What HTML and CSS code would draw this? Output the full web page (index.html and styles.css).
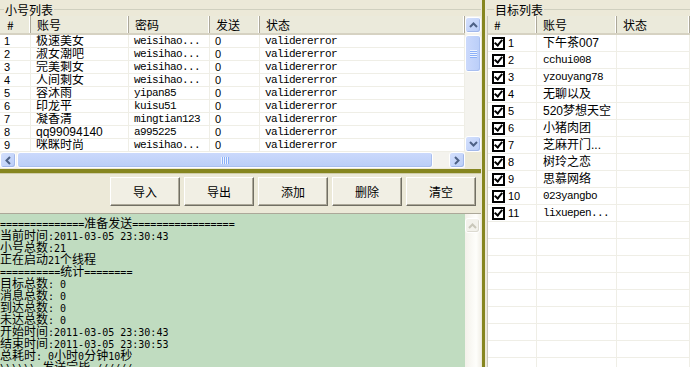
FILE: index.html
```html
<!DOCTYPE html>
<html lang="zh-CN">
<head>
    <meta charset="UTF-8">
    <title>群发</title>
    <link rel="stylesheet" href="styles.css">
</head>
<body>
<div class="app">
    <div class="left">
        <div class="group-title"><span>小号列表</span></div>
        <div class="listview accounts">
            <div class="lv-main">
                <div class="lv-head cols-a">
                    <div class="c-first">#</div><div>账号</div><div>密码</div><div>发送</div><div>状态</div>
                </div>
                <div class="lv-row cols-a"><div class="c-first num">1</div><div>极速美女</div><div class="mono">weisihao...</div><div class="num">0</div><div class="mono">validererror</div></div>
                <div class="lv-row cols-a"><div class="c-first num">2</div><div>淑女潮吧</div><div class="mono">weisihao...</div><div class="num">0</div><div class="mono">validererror</div></div>
                <div class="lv-row cols-a"><div class="c-first num">3</div><div>完美剩女</div><div class="mono">weisihao...</div><div class="num">0</div><div class="mono">validererror</div></div>
                <div class="lv-row cols-a"><div class="c-first num">4</div><div>人间剩女</div><div class="mono">weisihao...</div><div class="num">0</div><div class="mono">validererror</div></div>
                <div class="lv-row cols-a"><div class="c-first num">5</div><div>容沐雨</div><div class="mono">yipan85</div><div class="num">0</div><div class="mono">validererror</div></div>
                <div class="lv-row cols-a"><div class="c-first num">6</div><div>印龙平</div><div class="mono">kuisu51</div><div class="num">0</div><div class="mono">validererror</div></div>
                <div class="lv-row cols-a"><div class="c-first num">7</div><div>凝香清</div><div class="mono">mingtian123</div><div class="num">0</div><div class="mono">validererror</div></div>
                <div class="lv-row cols-a"><div class="c-first num">8</div><div>qq99094140</div><div class="mono">a995225</div><div class="num">0</div><div class="mono">validererror</div></div>
                <div class="lv-row cols-a"><div class="c-first num">9</div><div>咪眯时尚</div><div class="mono">weisihao...</div><div class="num">0</div><div class="mono">validererror</div></div>
            </div>
            <div class="vscroll">
                <div class="sb-btn"><svg width="9" height="6" viewBox="0 0 9 6"><polyline points="1,5 4.5,1.5 8,5" fill="none" stroke="#4d6185" stroke-width="2"/></svg></div>
                <div class="sb-thumb v"><span class="grip"></span></div>
                <div class="sb-track"></div>
                <div class="sb-btn"><svg width="9" height="6" viewBox="0 0 9 6"><polyline points="1,1 4.5,4.5 8,1" fill="none" stroke="#4d6185" stroke-width="2"/></svg></div>
            </div>
            <div class="hscroll">
                <div class="sb-btn"><svg width="6" height="9" viewBox="0 0 6 9"><polyline points="5,1 1.5,4.5 5,8" fill="none" stroke="#4d6185" stroke-width="2"/></svg></div>
                <div class="sb-thumb h"><span class="grip"></span></div>
                <div class="sb-track"></div>
                <div class="sb-btn"><svg width="6" height="9" viewBox="0 0 6 9"><polyline points="1,1 4.5,4.5 1,8" fill="none" stroke="#4d6185" stroke-width="2"/></svg></div>
            </div>
            <div class="corner"></div>
        </div>

        <div class="hsplit"></div>

        <div class="toolbar">
            <button class="btn">导入</button>
            <button class="btn">导出</button>
            <button class="btn">添加</button>
            <button class="btn">删除</button>
            <button class="btn">清空</button>
        </div>

        <div class="log">
            <div class="log-text">
                <div class="line"><span class="en">==============</span>准备发送<span class="en">=================</span></div>
                <div class="line">当前时间<span class="en">:2011-03-05 23:30:43</span></div>
                <div class="line">小号总数<span class="en">:21</span></div>
                <div class="line">正在启动<span class="en">21</span>个线程</div>
                <div class="line"><span class="en">==========</span>统计<span class="en">========</span></div>
                <div class="line">目标总数<span class="en">: 0</span></div>
                <div class="line">消息总数<span class="en">: 0</span></div>
                <div class="line">到达总数<span class="en">: 0</span></div>
                <div class="line">未达总数<span class="en">: 0</span></div>
                <div class="line">开始时间<span class="en">:2011-03-05 23:30:43</span></div>
                <div class="line">结束时间<span class="en">:2011-03-05 23:30:53</span></div>
                <div class="line">总耗时<span class="en">: 0</span>小时<span class="en">0</span>分钟<span class="en">10</span>秒</div>
                <div class="line"><span class="en">\\\\\\ </span>发送完毕<span class="en"> //////</span></div>
            </div>
            <div class="vscroll disabled">
                <div class="sb-btn"><svg width="9" height="6" viewBox="0 0 9 6"><polyline points="1,5 4.5,1.5 8,5" fill="none" stroke="#c9c7ba" stroke-width="2"/></svg></div>
            </div>
        </div>
    </div>

    <div class="vsplit"></div>

    <div class="right">
        <div class="group-title"><span>目标列表</span></div>
        <div class="listview targets">
            <div class="lv-head cols-b">
                <div>#</div><div>账号</div><div>状态</div>
            </div>
            <div class="lv-row cols-b"><div class="chk"><span class="cb"></span>1</div><div>下午茶007</div><div></div></div>
            <div class="lv-row cols-b"><div class="chk"><span class="cb"></span>2</div><div class="mono">cchui008</div><div></div></div>
            <div class="lv-row cols-b"><div class="chk"><span class="cb"></span>3</div><div class="mono">yzouyang78</div><div></div></div>
            <div class="lv-row cols-b"><div class="chk"><span class="cb"></span>4</div><div>无聊以及</div><div></div></div>
            <div class="lv-row cols-b"><div class="chk"><span class="cb"></span>5</div><div>520梦想天空</div><div></div></div>
            <div class="lv-row cols-b"><div class="chk"><span class="cb"></span>6</div><div>小猪肉团</div><div></div></div>
            <div class="lv-row cols-b"><div class="chk"><span class="cb"></span>7</div><div>芝麻开门...</div><div></div></div>
            <div class="lv-row cols-b"><div class="chk"><span class="cb"></span>8</div><div>树玲之恋</div><div></div></div>
            <div class="lv-row cols-b"><div class="chk"><span class="cb"></span>9</div><div>思慕网络</div><div></div></div>
            <div class="lv-row cols-b"><div class="chk"><span class="cb"></span>10</div><div class="mono">023yangbo</div><div></div></div>
            <div class="lv-row cols-b"><div class="chk"><span class="cb"></span>11</div><div class="mono">lixuepen...</div><div></div></div>
            <div class="lv-row cols-b"><div></div><div></div><div></div></div>
            <div class="lv-row cols-b"><div></div><div></div><div></div></div>
            <div class="lv-row cols-b"><div></div><div></div><div></div></div>
            <div class="lv-row cols-b"><div></div><div></div><div></div></div>
            <div class="lv-row cols-b"><div></div><div></div><div></div></div>
            <div class="lv-row cols-b"><div></div><div></div><div></div></div>
            <div class="lv-row cols-b"><div></div><div></div><div></div></div>
            <div class="lv-row cols-b"><div></div><div></div><div></div></div>
            <div class="lv-row cols-b"><div></div><div></div><div></div></div>
        </div>
    </div>
</div>
</body>
</html>
```

FILE: styles.css
```css
* {
    box-sizing: border-box;
}

body {
    margin: 0;
    background-color: #ece9d8;
    font-family: 'Liberation Sans', 'Noto Sans CJK SC', sans-serif;
    font-size: 12px;
    color: #000;
}

.app {
    display: flex;
    width: 690px;
    height: 367px;
    overflow: hidden;
}

/* ---- panels ---- */

.left {
    width: 481px;
    flex-shrink: 0;
    display: flex;
    flex-direction: column;
}

.right {
    flex: 1;
    display: flex;
    flex-direction: column;
    min-width: 0;
}

.vsplit {
    width: 3px;
    flex-shrink: 0;
    background-color: #86861f;
    border-left: 1px solid #ece9d8;
    border-right: 2px solid #ece9d8;
    box-sizing: content-box;
}

.hsplit {
    height: 6px;
    flex-shrink: 0;
    background-color: #86861f;
    border-top: 1px solid #ece9d8;
    border-bottom: 1px solid #cfcca8;
}

/* ---- group titles ---- */

.group-title {
    height: 16px;
    flex-shrink: 0;
    display: flex;
    align-items: center;
    padding-top: 3px;
    line-height: 12px;
    font-family: 'Noto Sans CJK SC', sans-serif;
}

.group-title::before {
    content: '';
    width: 4px;
    border-top: 1px solid #d0d0bf;
}

.group-title::after {
    content: '';
    flex: 1;
    border-top: 1px solid #d0d0bf;
}

.group-title span {
    padding: 0 1px;
}

.right .group-title::before {
    width: 7px;
}

/* ---- list views ---- */

.listview {
    background-color: #fff;
    overflow: hidden;
}

.accounts {
    display: grid;
    grid-template-columns: 465px 16px;
    grid-template-rows: 136px 16px;
    flex-shrink: 0;
}

.lv-main {
    overflow: hidden;
}

.cols-a {
    display: grid;
    grid-template-columns: 31px 98px 81px 50px 1fr;
}

.cols-b {
    display: grid;
    grid-template-columns: 49px 80px 1fr;
}

.lv-head {
    height: 19px;
    background-color: #ebeadb;
    border-bottom: 2px solid #d6d2c2;
    font-family: 'Noto Sans CJK SC', sans-serif;
}

.lv-head div {
    padding-left: 6px;
    line-height: 17px;
    border-right: 1px solid #aca899;
    box-shadow: inset -1px 0 #fff;
    white-space: nowrap;
    overflow: hidden;
}

.lv-head .c-first {
    padding-left: 7px;
}

.lv-row {
    height: 13px;
    border-bottom: 1px solid #efeee6;
}

.lv-row div {
    padding-left: 5px;
    line-height: 12px;
    border-right: 1px solid #efeee6;
    white-space: nowrap;
    overflow: hidden;
}

.lv-row .c-first {
    padding-left: 4px;
}

.num {
    font-family: 'Liberation Sans', sans-serif;
    font-size: 11px;
}

.mono {
    font-family: 'Liberation Mono', monospace;
    font-size: 11px;
    letter-spacing: -0.6px;
}

.targets {
    flex: 1;
    border-left: 1px solid #c9c7ba;
}

.targets .lv-row {
    height: 17px;
}

.targets .lv-row div {
    line-height: 16px;
    padding-left: 6px;
}

.targets .lv-row .chk {
    display: flex;
    align-items: center;
    gap: 3px;
    padding-left: 4px;
    font-size: 11px;
}

.cb {
    position: relative;
    width: 13px;
    height: 13px;
    border: 2px solid #000;
    background-color: #fff;
}

.cb::after {
    content: '';
    position: absolute;
    left: 2px;
    top: -1px;
    width: 3px;
    height: 6px;
    border: solid #000;
    border-width: 0 2px 2px 0;
    transform: rotate(40deg);
}

/* ---- scrollbars ---- */

.vscroll,
.hscroll {
    display: flex;
    background-color: #f4f3ee;
}

.vscroll {
    flex-direction: column;
    width: 16px;
    padding-top: 1px;
}

.hscroll {
    height: 16px;
}

.sb-btn {
    width: 16px;
    height: 16px;
    flex-shrink: 0;
    display: flex;
    align-items: center;
    justify-content: center;
    border: 1px solid #fff;
    border-radius: 3px;
    background: linear-gradient(135deg, #d4e0fd, #b9cdf7);
    box-shadow: inset -1px -1px #a2b8ea;
}

.sb-thumb {
    display: flex;
    align-items: center;
    justify-content: center;
    border: 1px solid #fff;
    border-radius: 3px;
    background: linear-gradient(90deg, #cbd9fc, #bacef8);
    box-shadow: inset -1px -1px #a9bff0;
}

.sb-thumb.v {
    height: 37px;
    margin-top: 2px;
}

.sb-thumb.h {
    width: 416px;
    margin-left: 1px;
    background: linear-gradient(#cbd9fc, #bacef8);
}

.sb-thumb.v .grip {
    width: 7px;
    height: 8px;
    background: repeating-linear-gradient(#eef4fe 0 1px, #8cb0f8 1px 2px);
}

.sb-thumb.h .grip {
    width: 8px;
    height: 7px;
    background: repeating-linear-gradient(90deg, #eef4fe 0 1px, #8cb0f8 1px 2px);
}

.sb-track {
    flex: 1;
}

.corner {
    background-color: #ece9d8;
}

.vscroll.disabled {
    background: linear-gradient(90deg, #f3f1ea, #fefefb 70%, #f2f0e8);
    padding-top: 4px;
}

.vscroll.disabled .sb-btn {
    width: 15px;
    height: 15px;
    background: #f3f2ec;
    border-color: #fff;
    box-shadow: inset -1px -1px #dcdad0;
}

/* ---- buttons ---- */

.toolbar {
    height: 39px;
    flex-shrink: 0;
    display: flex;
    justify-content: flex-end;
    gap: 4px;
    padding: 3px 5px 0 0;
}

.btn {
    width: 70px;
    height: 29px;
    padding: 0;
    background-color: #f1efe4;
    border: 1px solid;
    border-color: #fff #716f64 #716f64 #fff;
    box-shadow: inset -1px -1px #aca899;
    font-family: 'Noto Sans CJK SC', sans-serif;
    font-size: 12px;
    color: #000;
}

/* ---- log ---- */

.log {
    flex: 1;
    min-height: 0;
    display: flex;
    background-color: #c0dcc0;
    border-top: 1px solid #aca899;
}

.log-text {
    flex: 1;
    padding-top: 3px;
    overflow: hidden;
    font-family: 'Noto Sans CJK SC', sans-serif;
}

.line {
    height: 12px;
    line-height: 12px;
    white-space: pre;
}

.en {
    font-family: 'DejaVu Sans Mono', monospace;
    font-size: 10px;
}
```
